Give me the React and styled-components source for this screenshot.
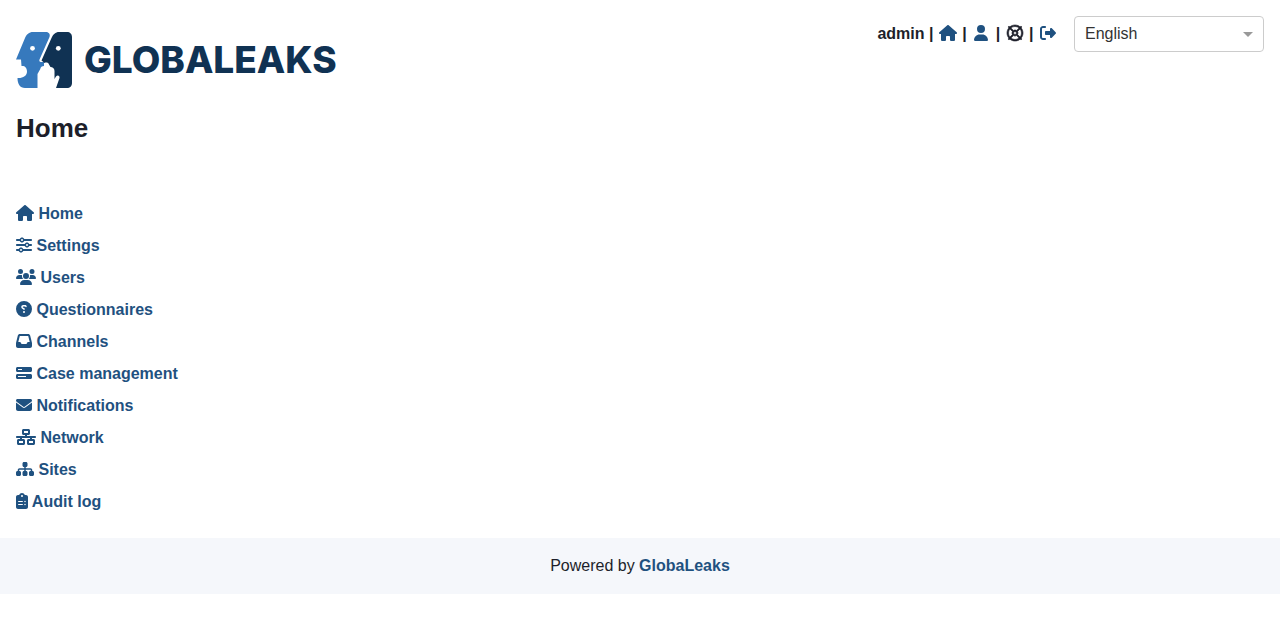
import React from "react";
import styled, { createGlobalStyle } from "styled-components";
import {
  FaHouse,
  FaUser,
  FaRegLifeRing,
  FaRightFromBracket,
  FaSliders,
  FaUsers,
  FaCircleQuestion,
  FaInbox,
  FaBarsProgress,
  FaEnvelope,
  FaNetworkWired,
  FaSitemap,
  FaClipboardList,
} from "react-icons/fa6";

const GlobalStyle = createGlobalStyle`
  *, *::before, *::after { box-sizing: border-box; }
  body {
    margin: 0;
    background: #fff;
    color: #1d1f2a;
    font: 16px/24px "Liberation Sans", Arial, sans-serif;
  }
`;

const Header = styled.header`
  display: flex;
  justify-content: space-between;
  align-items: flex-start;
  padding: 16px 16px 0;
`;

const Brand = styled.a`
  display: flex;
  align-items: center;
  gap: 12px;
  margin-top: 16px;
  color: #103253;
  text-decoration: none;
`;

const Mark = styled.svg`
  display: block;
  width: 56px;
  height: 56px;
`;

const Wordmark = styled.span`
  font: 800 37px/56px Inter, "Liberation Sans", sans-serif;
`;

const Tools = styled.div`
  display: flex;
  align-items: center;
  gap: 16px;
`;

const Session = styled.div`
  font-weight: 700;
  white-space: nowrap;
`;

const ToolLink = styled.a`
  color: #1f5180;
  text-decoration: none;
`;

const ToolButton = styled.button`
  padding: 0;
  border: 0;
  background: none;
  color: inherit;
  font: inherit;
  cursor: pointer;
`;

const Icon = styled.span`
  display: inline-flex;
  justify-content: center;
  width: ${(p) => p.$box || p.$width || 16}px;
  height: 16px;
  vertical-align: -2px;

  svg {
    flex: none;
    width: ${(p) => p.$width || 16}px;
    height: 16px;
    overflow: visible;
    stroke: currentColor;
    stroke-width: ${(p) => (p.$heavy ? 20 : 0)};
    transform: ${(p) => (p.$mirrored ? "scaleX(-1)" : "none")};
  }
`;

const SelectBox = styled.div`
  position: relative;
  width: 190px;

  &::after {
    content: "";
    position: absolute;
    top: 16px;
    right: 11px;
    border: 5px solid transparent;
    border-top-color: #999;
    border-bottom: 0;
    pointer-events: none;
  }
`;

const Select = styled.select`
  display: block;
  width: 100%;
  height: 36px;
  padding: 0 32px 0 10px;
  border: 1px solid #ccc;
  border-radius: 4px;
  appearance: none;
  background: #fff;
  color: #333;
  font: inherit;
`;

const Title = styled.h1`
  margin: 24px 16px 0;
  font-size: 26px;
  line-height: 32px;
`;

const Menu = styled.ul`
  margin: 0;
  padding: 54px 16px 20px;
  list-style: none;
`;

const MenuItem = styled.li`
  padding: 4px 0;
`;

const MenuLink = styled.a`
  color: #1f5180;
  font-weight: 700;
  text-decoration: none;
`;

const Footer = styled.footer`
  padding: 16px;
  background: #f5f7fb;
  text-align: center;
`;

const menu = [
  { label: "Home", glyph: FaHouse, width: 18 },
  { label: "Settings", glyph: FaSliders, width: 16 },
  { label: "Users", glyph: FaUsers, width: 20 },
  { label: "Questionnaires", glyph: FaCircleQuestion, width: 16, mirrored: true },
  { label: "Channels", glyph: FaInbox, width: 16 },
  { label: "Case management", glyph: FaBarsProgress, width: 16, mirrored: true },
  { label: "Notifications", glyph: FaEnvelope, width: 16 },
  { label: "Network", glyph: FaNetworkWired, width: 20 },
  { label: "Sites", glyph: FaSitemap, width: 18 },
  { label: "Audit log", glyph: FaClipboardList, width: 12, mirrored: true },
];

function Logo() {
  return (
    <Mark viewBox="0 0 56 56" aria-hidden="true">
      <path
        fill="#3679bd"
        d="M17 0H30C33 0 34.500 2.500 33.500 5L23.500 27.500C23 29 23.500 30 25 30H28V34C26 34 24.500 35 24.300 37L21.500 42V56H9C4 56 1.500 52 1.500 46C6.500 46.500 11 44 11 39.500C11 35.500 8.500 33.500 5.500 34L5 27.500L0 27.500L9 6C10.500 2.500 13 0 17 0Z"
      />
      <path
        fill="#103253"
        d="M43 0H51C54 0 56 2 56 5V51C56 54 54 56 51 56H40L43.500 46C44 43.500 41.500 42.500 40 44.500L38.500 47V39C38.500 36.500 36.500 35 34.500 35L33 32.500C32.500 30.500 30 30 28.500 31L25.500 28.500L35.500 6C37 2.500 39.500 0 43 0Z"
      />
      <circle cx="16.500" cy="16.300" r="2.400" fill="#fff" />
      <circle cx="42.300" cy="16.300" r="2.400" fill="#fff" />
    </Mark>
  );
}

export default function App() {
  return (
    <>
      <GlobalStyle />
      <Header>
        <Brand href="#/" aria-label="GLOBALEAKS">
          <Logo />
          <Wordmark>GLOBALEAKS</Wordmark>
        </Brand>
        <Tools>
          <Session>
            admin |{" "}
            <ToolLink href="#/home" aria-label="Home"><Icon $box={20} $width={18}><FaHouse /></Icon></ToolLink>
            {" | "}
            <ToolLink href="#/preferences" aria-label="Preferences"><Icon $box={20} $width={14}><FaUser /></Icon></ToolLink>
            {" | "}
            <ToolButton type="button" aria-label="Help"><Icon $box={20} $heavy><FaRegLifeRing /></Icon></ToolButton>
            {" | "}
            <ToolLink href="#/logout" aria-label="Log out"><Icon $box={20}><FaRightFromBracket /></Icon></ToolLink>
          </Session>
          <SelectBox>
            <Select aria-label="Language" defaultValue="en">
              <option value="en">English</option>
            </Select>
          </SelectBox>
        </Tools>
      </Header>
      <main>
        <Title>Home</Title>
        <nav aria-label="Administration">
          <Menu>
            {menu.map(({ label, glyph: Glyph, width, mirrored }) => (
              <MenuItem key={label}>
                <MenuLink href="#/admin">
                  <Icon $width={width} $mirrored={mirrored}><Glyph /></Icon> {label}
                </MenuLink>
              </MenuItem>
            ))}
          </Menu>
        </nav>
      </main>
      <Footer>
        Powered by <MenuLink href="#/about">GlobaLeaks</MenuLink>
      </Footer>
    </>
  );
}
